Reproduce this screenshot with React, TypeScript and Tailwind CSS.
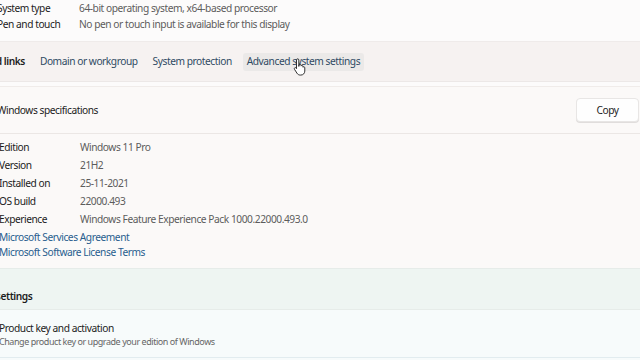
import React from "react";

const font = { fontFamily: '"Noto Sans", "Open Sans", sans-serif' };

function Row({ label, value }: { label: string; value: string }) {
  return (
    <div className="flex h-[18px] items-center">
      <div className="w-[81px] shrink-0 text-[#1c1c1c]">{label}</div>
      <div className="text-[#5c5c5c]">{value}</div>
    </div>
  );
}

export default function App() {
  return (
    <div
      className="w-[640px] h-[360px] overflow-hidden bg-[#fcfbfb] text-[10.2px] tracking-[-0.45px] leading-none"
      style={font}
    >
      {/* top card */}
      <div className="h-[42px] bg-[#fcfbfb] border-b border-[#efebea]">
        <div className="ml-[-3px] flex flex-col">
          <div className="flex h-[17px] items-center">
            <div className="w-[82px] shrink-0 text-[#1c1c1c]">System type</div>
            <div className="text-[#5c5c5c]">64-bit operating system, x64-based processor</div>
          </div>
          <div className="flex h-[15px] items-center">
            <div className="w-[82px] shrink-0 text-[#1c1c1c]">Pen and touch</div>
            <div className="text-[#5c5c5c]">No pen or touch input is available for this display</div>
          </div>
        </div>
      </div>
      {/* related links */}
      <div className="h-[40px] bg-[#f6f2f1] border-b border-[#ece8e7] flex items-center">
        <div className="ml-[-33px] flex items-center">
          <span className="text-[#1c1c1c] font-semibold">Related links</span>
          <span className="ml-[15px] text-[#2f4a63]">Domain or workgroup</span>
          <span className="ml-[15px] text-[#2f4a63]">System protection</span>
          <span className="ml-[11px] px-[4px] h-[18px] flex items-center bg-[#ebe9e8] rounded-[3px] text-[#2f4a63] relative">
            Advanced system settings
            <svg
              className="absolute left-[50px] top-[5px]"
              width="14"
              height="18"
              viewBox="0 0 12 15"
            >
              <path
                d="M3 1.5c0-.6.4-1 1-1s1 .4 1 1V7l.2-1.3c.2-.5.6-.7 1-.6.5.1.7.5.7 1v.6c.2-.4.6-.6 1-.5.4.1.6.5.6.9v.6c.2-.3.6-.5 1-.4.4.1.6.5.6.9V11c0 1.9-1.4 3.4-3.3 3.4H6.2c-1.2 0-2.2-.6-2.8-1.6L1.3 9.5c-.3-.5-.2-1 .2-1.3.4-.3 1-.2 1.3.2L3 8.9z"
                fill="#fff"
                stroke="#222"
                strokeWidth="0.8"
              />
            </svg>
          </span>
        </div>
      </div>
      {/* specs card */}
      <div className="h-[4px] bg-[#fcfbfb]" />
      <div className="bg-[#fbf9f8] border-t border-[#f0ecea]">
        <div className="h-[47px] flex items-center justify-between border-b border-[#ebe7e5] pr-[1px]">
          <span className="ml-[-3px] text-[#1c1c1c]">Windows specifications</span>
          <div className="w-[63px] h-[24px] rounded-[4px] bg-[#fefefe] border border-[#e8e6e5] flex items-center justify-center text-[#1c1c1c] shadow-[0_1px_0_#e0dddc]">
            Copy
          </div>
        </div>
        <div className="pt-[4px] h-[134px]">
          <div className="ml-[-1px]">
            <Row label="Edition" value="Windows 11 Pro" />
            <Row label="Version" value="21H2" />
            <Row label="Installed on" value="25-11-2021" />
            <Row label="OS build" value="22000.493" />
            <Row label="Experience" value="Windows Feature Experience Pack 1000.22000.493.0" />
            <div className="h-[2px]" />
            <div className="h-[15px] flex items-center text-[#285d8e]">Microsoft Services Agreement</div>
            <div className="h-[15px] flex items-center text-[#285d8e]">Microsoft Software License Terms</div>
          </div>
        </div>
      </div>
      {/* related settings */}
      <div className="h-[42px] bg-[#eef5f2] border-t border-[#e6ece9] border-b flex items-end pb-[8px]">
        <span className="ml-[-41px] font-semibold text-[#1c1c1c]">Related settings</span>
      </div>
      <div className="h-[48px] bg-[#f7fbfb] border-b border-[#e2ecef] flex flex-col justify-center pt-[2px]">
        <div className="ml-[-1px] text-[#1c1c1c]">Product key and activation</div>
        <div className="ml-[-1px] mt-[4px] text-[9px] text-[#666]">Change product key or upgrade your edition of Windows</div>
      </div>
      <div className="h-[10px] bg-[#f7fbfb]" />
    </div>
  );
}
